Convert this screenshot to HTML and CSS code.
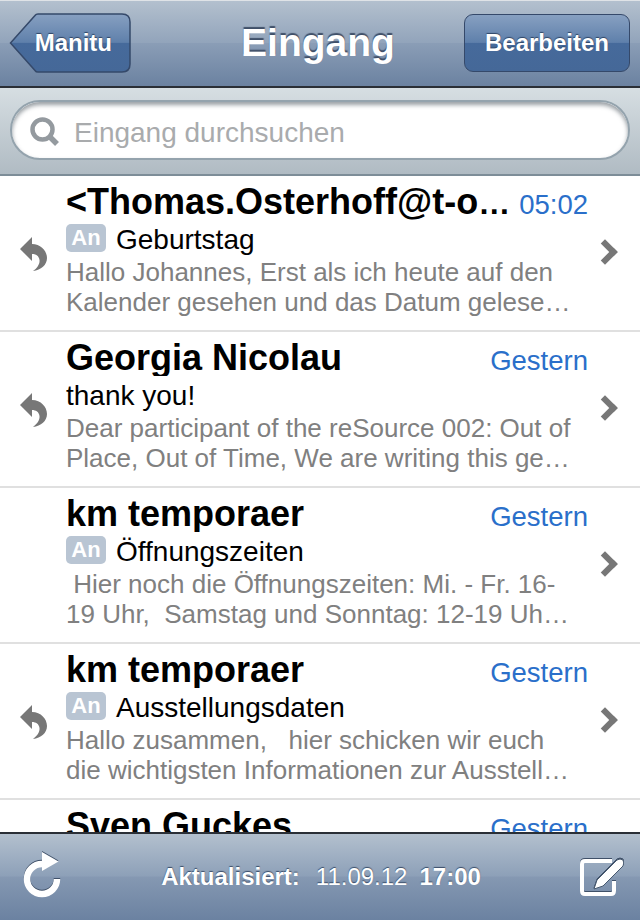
FILE: index.html
```html
<!DOCTYPE html>
<html lang="de">
<head>
    <meta charset="UTF-8">
    <title>Eingang</title>
    <link rel="stylesheet" href="styles.css">
</head>
<body>
    <div class="screen">
        <div class="navbar">
            <a class="back-button">
                <svg class="back-shape" width="122" height="60" viewBox="0 0 122 60">
                    <defs>
                        <linearGradient id="backFill" x1="0" y1="0" x2="0" y2="1">
                            <stop offset="0" stop-color="#87a0c1"/>
                            <stop offset="0.49" stop-color="#5f80ab"/>
                            <stop offset="0.5" stop-color="#466a9b"/>
                            <stop offset="1" stop-color="#456898"/>
                        </linearGradient>
                    </defs>
                    <path d="M1.5 30 L26 2.5 Q27 1 29 1 H113 Q121 1 121 9 V51 Q121 59 113 59 H29 Q27 59 26 57.5 Z" fill="url(#backFill)" stroke="#35496a" stroke-width="1.5"/>
                </svg>
                <span class="back-label">Manitu</span>
            </a>
            <h1 class="title">Eingang</h1>
            <a class="edit-button">Bearbeiten</a>
        </div>

        <div class="searchbar">
            <div class="search-field">
                <svg class="search-icon" width="30" height="30" viewBox="0 0 30 30">
                    <circle cx="12.5" cy="12.5" r="10" fill="none" stroke="#949a9f" stroke-width="4.5"/>
                    <path d="M19.5 19.5 L27 27" stroke="#949a9f" stroke-width="5.5" fill="none"/>
                </svg>
                <span class="search-text">Eingang durchsuchen</span>
            </div>
        </div>

        <div class="messages">
            <div class="message">
                <div class="status">
                    <svg class="reply-icon" width="28" height="35" viewBox="0 0 28 35"><path d="M0 12 L12 0 V7 C21 7 27 14 27 21 C27 28 21 33 13 34 C17 31 20 27 19.500 23 C19 19 16 17 12 17 V24 Z" fill="#777"/></svg>
                </div>
                <div class="content">
                    <div class="top-line">
                        <span class="sender">&lt;Thomas.Osterhoff@t-o<span class="dots">…</span></span>
                        <span class="date">05:02</span>
                    </div>
                    <div class="subject"><span class="badge">An</span>Geburtstag</div>
                    <div class="preview">Hallo Johannes, Erst als ich heute auf den</div>
                    <div class="preview">Kalender gesehen und das Datum gelesen habe, ist mir eingefallen</div>
                </div>
                <div class="chevron"></div>
            </div>
            <div class="message">
                <div class="status">
                    <svg class="reply-icon" width="28" height="35" viewBox="0 0 28 35"><path d="M0 12 L12 0 V7 C21 7 27 14 27 21 C27 28 21 33 13 34 C17 31 20 27 19.500 23 C19 19 16 17 12 17 V24 Z" fill="#777"/></svg>
                </div>
                <div class="content">
                    <div class="top-line">
                        <span class="sender">Georgia Nicolau</span>
                        <span class="date">Gestern</span>
                    </div>
                    <div class="subject">thank you!</div>
                    <div class="preview">Dear participant of the reSource 002: Out of</div>
                    <div class="preview">Place, Out of Time, We are writing this general message to all of you</div>
                </div>
                <div class="chevron"></div>
            </div>
            <div class="message">
                <div class="status"></div>
                <div class="content">
                    <div class="top-line">
                        <span class="sender">km temporaer</span>
                        <span class="date">Gestern</span>
                    </div>
                    <div class="subject"><span class="badge">An</span>Öffnungszeiten</div>
                    <div class="preview"> Hier noch die Öffnungszeiten: Mi. - Fr. 16-</div>
                    <div class="preview">19 Uhr,  Samstag und Sonntag: 12-19 Uhr und nach Vereinbarung</div>
                </div>
                <div class="chevron"></div>
            </div>
            <div class="message">
                <div class="status">
                    <svg class="reply-icon" width="28" height="35" viewBox="0 0 28 35"><path d="M0 12 L12 0 V7 C21 7 27 14 27 21 C27 28 21 33 13 34 C17 31 20 27 19.500 23 C19 19 16 17 12 17 V24 Z" fill="#777"/></svg>
                </div>
                <div class="content">
                    <div class="top-line">
                        <span class="sender">km temporaer</span>
                        <span class="date">Gestern</span>
                    </div>
                    <div class="subject"><span class="badge">An</span>Ausstellungsdaten</div>
                    <div class="preview">Hallo zusammen,   hier schicken wir euch</div>
                    <div class="preview">die wichtigsten Informationen zur Ausstellung und den Terminen</div>
                </div>
                <div class="chevron"></div>
            </div>
            <div class="message">
                <div class="status"></div>
                <div class="content">
                    <div class="top-line">
                        <span class="sender">Sven Guckes</span>
                        <span class="date">Gestern</span>
                    </div>
                </div>
            </div>
        </div>

        <div class="toolbar">
            <svg class="refresh-icon" width="40" height="50" viewBox="0 0 40 50">
                <path d="M35 27 A15 15 0 1 1 20 12" fill="none" stroke="#fff" stroke-width="6.5"/>
                <path d="M20 0 L36.5 9.5 L20 19 Z" fill="#fff"/>
            </svg>
            <div class="updated">
                <b>Aktualisiert:</b><span class="updated-date">11.09.12</span><b>17:00</b>
            </div>
            <svg class="compose-icon" width="44" height="38" viewBox="0 0 44 38">
                <path d="M32 3 H5 Q2 3 2 6 V33 Q2 36 5 36 H31 Q34 36 34 33 V23" fill="none" stroke="#fff" stroke-width="4"/>
                <path d="M14 31 L17 22 L37 2 Q40 0 43 2 Q44.500 5 43 8 L23 28 Z" fill="#fff" stroke="#46586f" stroke-width="1"/>
            </svg>
        </div>
    </div>
</body>
</html>
```

FILE: styles.css
```css
* {
    margin: 0;
    padding: 0;
    box-sizing: border-box;
}

html, body {
    width: 640px;
    height: 920px;
    overflow: hidden;
}

body {
    font-family: "Liberation Sans", Arial, sans-serif;
    background-color: #fff;
}

.screen {
    display: flex;
    flex-direction: column;
    height: 920px;
}

/* Top bar */
.navbar {
    flex: none;
    height: 88px;
    display: grid;
    grid-template-columns: 1fr auto 1fr;
    align-items: start;
    padding: 13px 10px 0;
    background: linear-gradient(#b3c0ce, #92a4bb 49%, #8a9db6 50%, #6b82a1);
    border-top: 1px solid #dfe3e7;
    border-bottom: 2px solid #2a2f36;
}

.back-button {
    position: relative;
    width: 120px;
    height: 58px;
    display: flex;
    align-items: center;
    justify-content: flex-end;
    padding-right: 18px;
}

.back-shape {
    position: absolute;
    top: -1px;
    left: -1px;
}

.back-label {
    position: relative;
    font-size: 24px;
    font-weight: bold;
    color: #fff;
    text-shadow: 0 -1px 1px #2f4565;
}

.title {
    font-size: 39px;
    font-weight: bold;
    line-height: 57px;
    padding-right: 4px;
    color: #fff;
    text-shadow: 0 -2px 1px #3f4f68;
}

.edit-button {
    justify-self: end;
    width: 166px;
    height: 58px;
    display: flex;
    align-items: center;
    justify-content: center;
    font-size: 24px;
    font-weight: bold;
    color: #fff;
    text-shadow: 0 -1px 1px #2f4565;
    background: linear-gradient(#87a0c1, #5f80ab 49%, #466a9b 50%, #456898);
    border: 1.5px solid #35496a;
    border-radius: 9px;
}

/* Search */
.searchbar {
    flex: none;
    height: 88px;
    padding: 12px 10px 0;
    background: linear-gradient(#d6dee2, #b0bbc3);
    border-bottom: 2px solid #7d8d98;
}

.search-field {
    height: 60px;
    display: flex;
    align-items: center;
    gap: 14px;
    padding-left: 18px;
    background-color: #fff;
    border: 2px solid #94a3ad;
    border-radius: 30px;
    box-shadow: inset 0 3px 4px rgba(70, 80, 90, 0.55);
}

.search-icon {
    flex: none;
    margin-top: 3px;
}

.search-text {
    font-size: 28px;
    color: #a9abad;
    margin-top: 5px;
}

/* Message list */
.messages {
    flex: 1;
    min-height: 0;
    overflow: hidden;
    background-color: #fff;
}

.message {
    height: 156px;
    display: flex;
    align-items: center;
    border-bottom: 2px solid #e0e0e0;
}

.status {
    flex: none;
    width: 66px;
    padding-left: 20px;
    margin-top: 2px;
}

.reply-icon {
    display: block;
}

.content {
    flex: none;
    width: 522px;
    align-self: flex-start;
    padding-top: 8px;
}

.top-line {
    display: flex;
    justify-content: space-between;
    align-items: flex-start;
    height: 38px;
}

.sender {
    flex: 1;
    min-width: 0;
    overflow: hidden;
    white-space: nowrap;
    font-size: 36px;
    line-height: 36px;
    font-weight: bold;
    color: #000;
}

.dots {
    font-size: 32px;
}

.date {
    flex: none;
    font-size: 27.5px;
    line-height: 42px;
    color: #2a6fca;
}

.subject {
    display: flex;
    align-items: flex-start;
    height: 35px;
    line-height: 36px;
    font-size: 28px;
    color: #000;
}

.badge {
    flex: none;
    width: 40px;
    height: 28px;
    margin-top: 2px;
    margin-right: 10px;
    text-align: center;
    font-size: 22px;
    line-height: 28px;
    font-weight: bold;
    color: #fff;
    background-color: #b9c5d3;
    border-radius: 5px;
}

.preview {
    width: 510px;
    font-size: 26px;
    line-height: 30px;
    color: #808080;
    white-space: pre;
    overflow: hidden;
    text-overflow: ellipsis;
}

.chevron {
    flex: none;
    width: 18px;
    height: 18px;
    margin-left: 8px;
    margin-bottom: 2px;
    border-top: 6px solid #777;
    border-right: 6px solid #777;
    transform: rotate(45deg);
}

/* Bottom bar */
.toolbar {
    flex: none;
    height: 88px;
    display: flex;
    align-items: center;
    justify-content: space-between;
    padding: 0 16px 0 22px;
    background: linear-gradient(#b3c0ce, #8da0b8 49%, #8598b2 50%, #6b82a1);
    border-top: 2px solid #2a2f36;
}

.refresh-icon, .compose-icon {
    flex: none;
    filter: drop-shadow(0 -1px 0 #3f5068);
}

.updated {
    display: flex;
    gap: 12px;
    font-size: 24px;
    color: #fff;
    text-shadow: 0 -1px 1px #3a4d69;
}

.updated-date {
    margin-left: 4px;
}
```
